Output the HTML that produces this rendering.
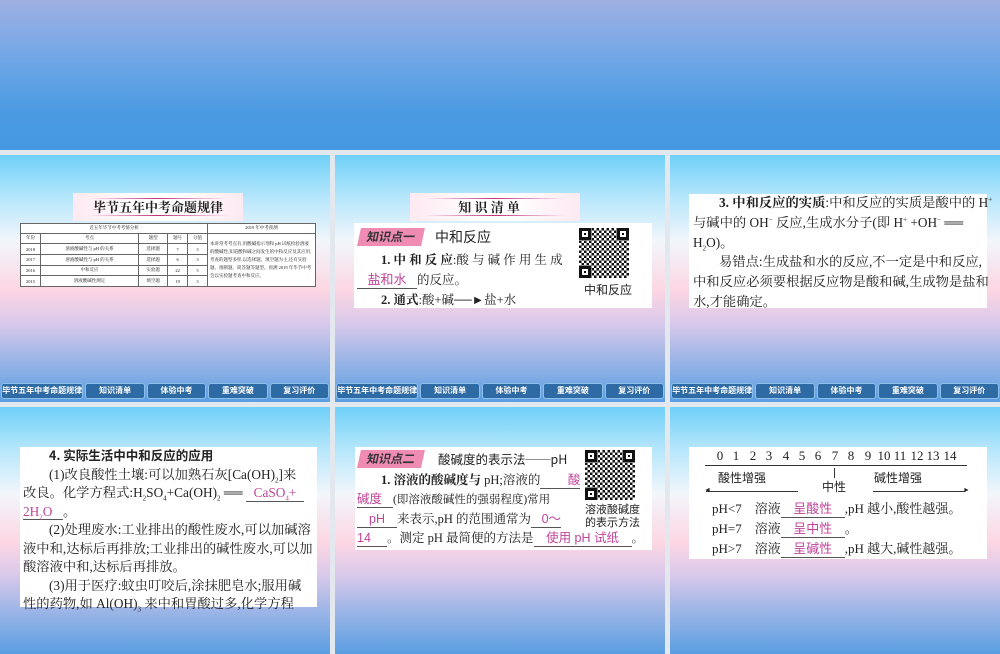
<!DOCTYPE html>
<html><head><meta charset="utf-8"><style>
*{margin:0;padding:0;box-sizing:border-box}
body{width:1000px;height:600px;overflow:hidden;background:#e2e8ee;position:relative;font-family:"Liberation Serif","Noto Serif CJK SC",serif;color:#222}
sub,sup{line-height:0;font-size:7px}
.top{position:absolute;left:0;top:0;width:1000px;height:150px;background:linear-gradient(#9fb0e2 0%,#6aa5e6 45%,#4a9ae2 75%,#4699e1 100%)}
.s{position:absolute;width:330px;background:linear-gradient(#6fd0f8 0%,#b5e6fb 17%,#f2f6fb 35%,#fcd6e3 55%,#d9c9ea 68%,#9fb6e6 82%,#5a9ee2 100%);overflow:hidden}
.r1{top:155px;height:247px}.r2{top:407px;height:247px}
.c1{left:0}.c2{left:335px}.c3{left:670px}
.a{position:absolute}
.w{position:absolute;background:#fff}
.nav{position:absolute;left:1px;top:228px;width:328px;height:16px;display:flex;gap:2px}
.nav div{flex:1;background:#2e6aa3;border:1px solid #8cc0ea;border-radius:3px;color:#fff;font:bold 8px "Liberation Sans","Noto Sans CJK SC",sans-serif;text-align:center;line-height:14px}
.nav div:first-child{flex:1.4}
.tt{position:absolute;background:linear-gradient(90deg,#fde9f1,#fff 40%,#fff 60%,#fde9f1);height:28px;text-align:center;font:bold 13px "Noto Serif CJK SC",serif;line-height:28px}
.tt:before,.tt:after{content:"";position:absolute;left:15px;right:15px;height:1px;background:linear-gradient(90deg,transparent,#c0307a,transparent)}
.tt:before{top:5px}.tt:after{bottom:5px}
.tag{position:absolute;background:#f08cb4;color:#333;font:bold 12px "Noto Sans CJK SC",sans-serif;padding:0 8px;line-height:18px;transform:skewX(-12deg)}
.p{font-size:12.5px;line-height:19.5px;font-family:"Liberation Serif","Noto Serif CJK SC",serif;white-space:nowrap}
.m{color:#c0449a;border-bottom:1px solid #555;display:inline-block;text-align:center;font-family:"Liberation Sans","Noto Sans CJK SC",sans-serif;line-height:1.2}
.qr{position:absolute;background:repeating-conic-gradient(#111 0 25%,#fff 0 50%) 0 0/5px 5px,#fff}
.qr i{position:absolute;width:12px;height:12px;border:3px solid #111;background:#fff}
.qr i:after{content:"";position:absolute;left:2px;top:2px;width:2px;height:2px;background:#111}
table{border-collapse:collapse;font-size:4.5px;background:#fff}
td{border:1px solid #666;text-align:center;height:8px}
.n{position:absolute;transform:translateX(-50%)}
</style></head><body>
<div class="top"></div>

<div class="s r1 c1">
<div class="tt" style="left:73px;top:38px;width:170px">毕节五年中考命题规律</div>
<table class="a" style="left:20px;top:68px;width:296px;height:64px">
<tr><td colspan="5">近五年毕节中考考情分析</td><td style="width:108px">2019 年中考预测</td></tr>
<tr><td>年份</td><td>考点</td><td>题型</td><td>题号</td><td>分值</td><td rowspan="5" style="text-align:left;padding:2px;line-height:8px">本讲常考考点有,用酸碱指示剂和 pH 试纸检验溶液的酸碱性,知道酸和碱之间发生的中和反应及其应用,考查的题型多样,以选择题、填空题为主,还有实验题、推断题、简答题等题型。预测 2019 年毕节中考会以实验题考查中和反应。</td></tr>
<tr><td>2018</td><td>溶液酸碱性与 pH 的关系</td><td>选择题</td><td>7</td><td>3</td></tr>
<tr><td>2017</td><td>溶液酸碱性与 pH 的关系</td><td>选择题</td><td>6</td><td>3</td></tr>
<tr><td>2016</td><td>中和反应</td><td>实验题</td><td>22</td><td>5</td></tr>
<tr><td>2015</td><td>溶液酸碱性测定</td><td>填空题</td><td>19</td><td>3</td></tr>
</table>
<div class="nav"><div>毕节五年中考命题规律</div><div>知识清单</div><div>体验中考</div><div>重难突破</div><div>复习评价</div></div>
</div>

<div class="s r1 c2">
<div class="tt" style="left:75px;top:38px;width:170px;text-align:right;padding-right:60px">知 识 清 单</div>
<div class="w" style="left:19px;top:68px;width:298px;height:85px"></div>
<div class="tag" style="left:24px;top:73px">知识点一</div>
<div class="a" style="left:100px;top:73px;font:14px 'Noto Sans CJK SC',sans-serif;line-height:18px">中和反应</div>
<div class="a p" style="left:22px;top:95px;line-height:20px"><span style="padding-left:24px"><b>1. 中 和 反 应</b>:酸 与 碱 作 用 生 成</span><br><span class="m" style="width:60px;font-size:13px">盐和水</span>的反应。<br><span style="padding-left:24px"><b>2. 通式</b>:酸+碱──►盐+水</span></div>
<div class="qr" style="left:244px;top:73px;width:50px;height:50px"><i style="left:0;top:0"></i><i style="right:0;top:0"></i><i style="left:0;bottom:0"></i></div>
<div class="a" style="left:249px;top:127px;font-size:12px;line-height:16px;font-family:'Noto Sans CJK SC',sans-serif">中和反应</div>
<div class="nav"><div>毕节五年中考命题规律</div><div>知识清单</div><div>体验中考</div><div>重难突破</div><div>复习评价</div></div>
</div>

<div class="s r1 c3">
<div class="w" style="left:19px;top:39px;width:298px;height:114px"></div>
<div class="a p" style="left:23px;top:38px;font-size:13.3px;line-height:19.8px"><span style="padding-left:26px"><b>3. 中和反应的实质</b>:中和反应的实质是酸中的 H<sup>+</sup></span><br>与碱中的 OH<sup>−</sup> 反应,生成水分子(即 H<sup>+</sup> +OH<sup>−</sup> ══<br>H<sub>2</sub>O)。<br><span style="padding-left:26px">易错点:生成盐和水的反应,不一定是中和反应,</span><br>中和反应必须要根据反应物是酸和碱,生成物是盐和<br>水,才能确定。</div>
<div class="nav"><div>毕节五年中考命题规律</div><div>知识清单</div><div>体验中考</div><div>重难突破</div><div>复习评价</div></div>
</div>

<div class="s r2 c1">
<div class="w" style="left:20px;top:40px;width:297px;height:160px"></div>
<div class="a p" style="left:23px;top:39px;font-size:13.3px;line-height:18.5px"><span style="padding-left:26px;font-family:'Noto Sans CJK SC',sans-serif;font-weight:bold;font-size:12.5px">4. 实际生活中中和反应的应用</span><br><span style="padding-left:26px">(1)改良酸性土壤:可以加熟石灰[Ca(OH)<sub>2</sub>]来</span><br>改良。化学方程式:H<sub>2</sub>SO<sub>4</sub>+Ca(OH)<sub>2</sub> ══ <span class="m" style="width:58px;font-family:inherit">CaSO<sub>4</sub>+</span><br><span class="m" style="width:40px;font-family:inherit;text-align:left">2H<sub>2</sub>O</span>。<br><span style="padding-left:26px">(2)处理废水:工业排出的酸性废水,可以加碱溶</span><br>液中和,达标后再排放;工业排出的碱性废水,可以加<br>酸溶液中和,达标后再排放。<br><span style="padding-left:26px">(3)用于医疗:蚊虫叮咬后,涂抹肥皂水;服用碱</span><br>性的药物,如 Al(OH)<sub>3</sub> 来中和胃酸过多,化学方程</div>
</div>

<div class="s r2 c2">
<div class="w" style="left:20px;top:40px;width:297px;height:103px"></div>
<div class="tag" style="left:24px;top:43px">知识点二</div>
<div class="a" style="left:103px;top:43px;font:12.5px 'Noto Sans CJK SC',sans-serif;line-height:18px">酸碱度的表示法──pH</div>
<div class="a p" style="left:22px;top:64px;line-height:19px"><span style="padding-left:24px"><b>1. 溶液的酸碱度与</b> pH;溶液的<span class="m" style="width:40px;text-align:right">酸</span></span><br><span class="m" style="width:36px;text-align:left">碱度</span><span style="font-size:11.5px">(即溶液酸碱性的强弱程度)常用</span><br><span class="m" style="width:40px">pH</span>来表示,pH 的范围通常为<span class="m" style="width:30px;text-align:right">0～</span><br><span class="m" style="width:30px;text-align:left">14</span>。测定 pH 最简便的方法是<span class="m" style="width:98px">使用 pH 试纸</span>。</div>
<div class="qr" style="left:250px;top:43px;width:50px;height:50px"><i style="left:0;top:0"></i><i style="right:0;top:0"></i><i style="left:0;bottom:0"></i></div>
<div class="a" style="left:250px;top:96px;font-size:11px;line-height:13px;font-family:'Noto Sans CJK SC',sans-serif">溶液酸碱度<br>的表示方法</div>
</div>

<div class="s r2 c3">
<div class="w" style="left:19px;top:40px;width:298px;height:112px"></div>
<div class="a" style="left:0;top:41px;font-size:13px;white-space:nowrap">
<span class="n" style="left:50px">0</span><span class="n" style="left:66px">1</span><span class="n" style="left:83px">2</span><span class="n" style="left:99px">3</span><span class="n" style="left:116px">4</span><span class="n" style="left:132px">5</span><span class="n" style="left:148px">6</span><span class="n" style="left:165px">7</span><span class="n" style="left:181px">8</span><span class="n" style="left:198px">9</span><span class="n" style="left:214px">10</span><span class="n" style="left:230px">11</span><span class="n" style="left:247px">12</span><span class="n" style="left:263px">13</span><span class="n" style="left:280px">14</span></div>
<div class="a" style="left:35px;top:58px;width:262px;height:1px;background:#333"></div>
<div class="a" style="left:48px;top:62px;font:12px 'Noto Sans CJK SC',sans-serif">酸性增强</div>
<div class="a" style="left:204px;top:62px;font:12px 'Noto Sans CJK SC',sans-serif">碱性增强</div>
<div class="a" style="left:152px;top:71px;font:12px 'Noto Sans CJK SC',sans-serif">中性</div>
<div class="a" style="left:164px;top:61px;width:1px;height:10px;background:#333"></div>
<div class="a" style="left:36px;top:84px;width:92px;height:1px;background:#333"></div>
<div class="a" style="left:34px;top:79px;font-size:7px">◄</div>
<div class="a" style="left:203px;top:84px;width:92px;height:1px;background:#333"></div>
<div class="a" style="left:293px;top:79px;font-size:7px">►</div>
<div class="a p" style="left:42px;top:92px;font-size:13px;line-height:20px">pH&lt;7　溶液<span class="m" style="width:64px">呈酸性</span>,pH 越小,酸性越强。<br>pH=7　溶液<span class="m" style="width:64px">呈中性</span>。<br>pH&gt;7　溶液<span class="m" style="width:64px">呈碱性</span>,pH 越大,碱性越强。</div>
</div>
</body></html>
